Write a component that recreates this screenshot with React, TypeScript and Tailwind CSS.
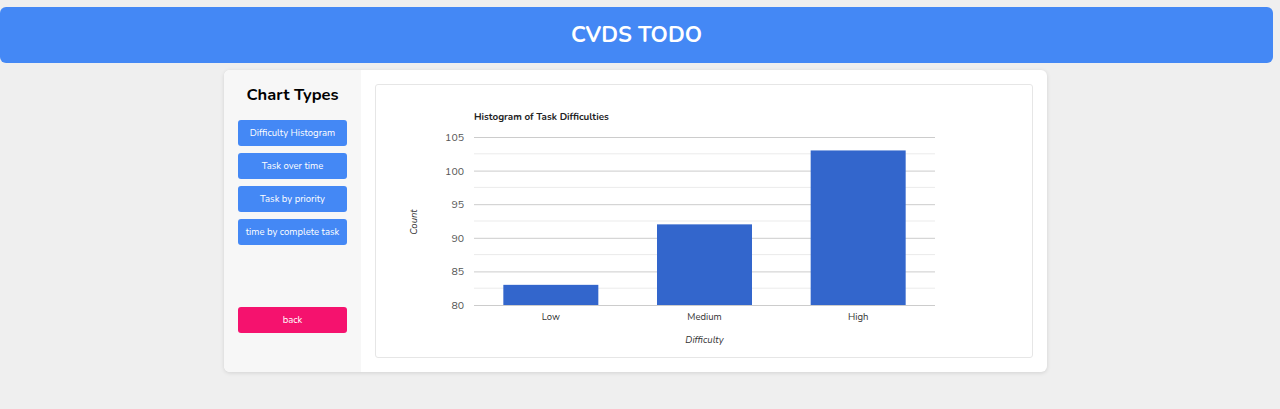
import React from "react"

const font = { fontFamily: '"Nunito", "Open Sans", "Noto Sans", sans-serif' }

const chartButtons = ["Difficulty Histogram", "Task over time", "Task by priority", "time by complete task"]

const data = [
  { label: "Low", value: 83 },
  { label: "Medium", value: 92 },
  { label: "High", value: 103 },
]

function Histogram() {
  // plot area in svg coords (svg origin = chart box top-left)
  const left = 98
  const right = 559
  const top = 52
  const bottom = 220
  const min = 80
  const max = 105
  const y = (v: number) => bottom - ((v - min) / (max - min)) * (bottom - top)
  const ticks = [80, 85, 90, 95, 100, 105]
  const minor = [82.5, 87.5, 92.5, 97.5, 102.5]
  const slot = (right - left) / data.length
  const barW = 95

  return (
    <svg width="656" height="272" className="block">
      <text x={left} y={35} fontSize="9.8" fontWeight="700" fill="#222" style={font}>
        Histogram of Task Difficulties
      </text>
      {minor.map((t) => (
        <line key={t} x1={left} x2={right} y1={y(t)} y2={y(t)} stroke="#ebebeb" strokeWidth="1" />
      ))}
      {ticks.map((t) => (
        <g key={t}>
          <line x1={left} x2={right} y1={y(t) + 0.5} y2={y(t) + 0.5} stroke="#cccccc" strokeWidth="1" />
          <text x={left - 10} y={y(t) + 4} fontSize="10.5" textAnchor="end" fill="#555" style={font}>
            {t}
          </text>
        </g>
      ))}
      {data.map((d, i) => {
        const cx = left + slot * i + slot / 2
        return (
          <g key={d.label}>
            <rect x={cx - barW / 2} y={y(d.value)} width={barW} height={bottom - y(d.value)} fill="#3366cc" />
            <text x={cx} y={bottom + 15} fontSize="9.5" textAnchor="middle" fill="#333" style={font}>
              {d.label}
            </text>
          </g>
        )
      })}
      <line x1={left} x2={right} y1={bottom + 0.5} y2={bottom + 0.5} stroke="#cccccc" strokeWidth="1" />
      <text x={(left + right) / 2} y={258} fontSize="9.5" fontStyle="italic" textAnchor="middle" fill="#333" style={font}>
        Difficulty
      </text>
      <text
        x={0}
        y={0}
        fontSize="9.5"
        fontStyle="italic"
        textAnchor="middle"
        fill="#333"
        style={font}
        transform="translate(41 137) rotate(-90)"
      >
        Count
      </text>
    </svg>
  )
}

export default function App() {
  return (
    <div className="min-h-[409px] bg-[#efefef] pt-[7px]" style={font}>
      <header className="mr-[7px] flex h-[56px] items-center justify-center rounded-[6px] bg-[#4488f5]">
        <h1 className="text-[22px] font-bold text-white">CVDS TODO</h1>
      </header>

      <div className="ml-[224px] mt-[7px] flex h-[302px] w-[823px] overflow-hidden rounded-[6px] bg-white shadow-[0_1px_4px_rgba(0,0,0,0.12)]">
        <aside className="flex w-[137px] flex-col items-center bg-[#f7f7f7] pt-[13px]">
          <h2 className="mb-[12px] text-[16.5px] font-bold text-black">Chart Types</h2>
          <div className="flex flex-col gap-[7px]">
            {chartButtons.map((b) => (
              <button
                key={b}
                className="h-[26px] w-[109px] rounded-[3px] bg-[#4488f5] text-[9.5px] text-white"
              >
                {b}
              </button>
            ))}
          </div>
          <button className="mt-[62px] h-[26px] w-[109px] rounded-[3px] bg-[#f5126e] text-[9.5px] text-white">
            back
          </button>
        </aside>

        <main className="flex-1 p-[14px]">
          <div className="h-[274px] w-[658px] rounded-[3px] border border-[#e6e6e6]">
            <Histogram />
          </div>
        </main>
      </div>
    </div>
  )
}
